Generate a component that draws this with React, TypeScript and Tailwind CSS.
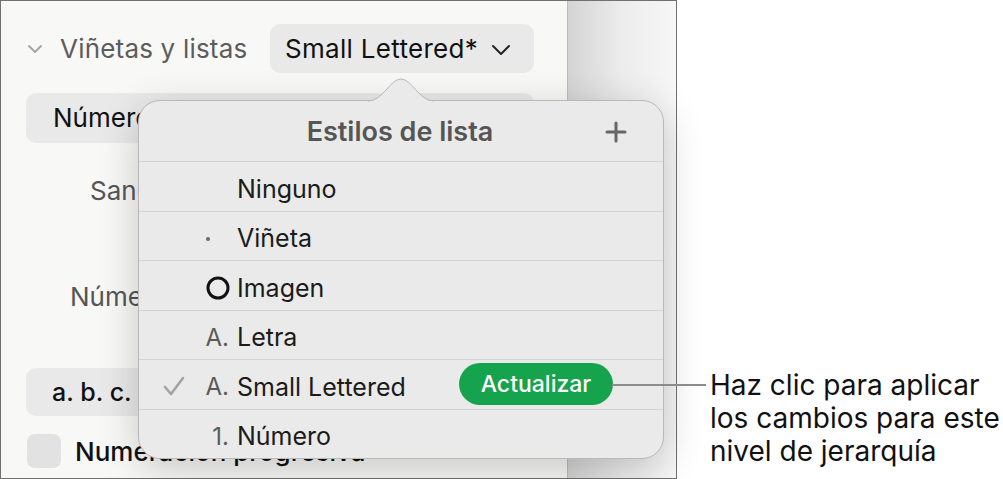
import React from "react";

function Row({
  prefix,
  label,
  checked,
  button,
}: {
  prefix?: React.ReactNode;
  label: string;
  checked?: boolean;
  button?: boolean;
}) {
  return (
    <div className="flex-1 flex items-center border-t border-[#d3d3d3] relative">
      <div className="w-[24px]" />
      <div className="w-[22px] flex items-center justify-center mt-[4px]">
        {checked && (
          <svg width="22" height="22" viewBox="0 0 22 22">
            <path d="M2 12 L8 19 L20 3" fill="none" stroke="#a3a3a3" strokeWidth="2.6" strokeLinecap="round" strokeLinejoin="round" />
          </svg>
        )}
      </div>
      <div className="w-[44px] flex justify-end items-center text-[24px] text-[#5a5a5a] mt-[6px]">{prefix}</div>
      <div className="ml-[8px] text-[25px] text-[#1b1b1b] leading-none mt-[6px]">{label}</div>
      {button && (
        <div className="ml-auto mr-[50px] w-[154px] h-[42px] rounded-full bg-[#15a34e] text-white text-[23px] font-medium flex items-center justify-center">
          Actualizar
        </div>
      )}
    </div>
  );
}

export default function App() {
  return (
    <div className="w-[1003px] h-[479px] bg-white relative flex font-[Inter,'Liberation_Sans',sans-serif] overflow-hidden">
      {/* Frame */}
      <div className="w-[677px] h-[479px] border border-[#707070] flex shrink-0 overflow-hidden">
        <div className="w-[566px] h-full bg-[#f8f8f7] flex flex-col pl-[25px] pr-[33px] pt-[23px]">
          <div className="flex items-center h-[49px]">
            <svg width="16" height="10" viewBox="0 0 16 10" className="ml-[1px]">
              <path d="M2 2 L8 8 L14 2" fill="none" stroke="#a6a6a6" strokeWidth="2" strokeLinecap="round" strokeLinejoin="round" />
            </svg>
            <div className="ml-[17px] text-[26px] text-[#5c5c5c] leading-none tracking-[0.2px]">Viñetas y listas</div>
            <div className="ml-auto w-[264px] h-[49px] rounded-[10px] bg-[#e9e9e9] flex items-center pl-[15px]">
              <span className="text-[26px] text-[#111] leading-none whitespace-nowrap tracking-[0.3px]">Small Lettered*</span>
              <svg width="20" height="12" viewBox="0 0 20 12" className="ml-[13px] mt-[2px]">
                <path d="M2 2 L10 10 L18 2" fill="none" stroke="#222" strokeWidth="2" strokeLinecap="round" strokeLinejoin="round" />
              </svg>
            </div>
          </div>
          <div className="mt-[20px] h-[50px] rounded-[10px] bg-[#e9e9e9] flex items-center pl-[27px]">
            <span className="text-[26px] text-[#111] leading-none">Número</span>
          </div>
          <div className="h-[96px] flex items-center pl-[64px]">
            <span className="text-[26px] text-[#555] leading-none">Sangría</span>
          </div>
          <div className="h-[116px] flex items-center pl-[44px]">
            <span className="text-[26px] text-[#555] leading-none">Número</span>
          </div>
          <div className="mt-[13px] h-[48px] rounded-[10px] bg-[#e9e9e9] flex items-center pl-[26px] w-[200px]">
            <span className="text-[25px] text-[#111] font-medium leading-none">a. b. c.</span>
          </div>
          <div className="mt-[18px] flex items-center">
            <div className="w-[34px] h-[34px] rounded-[8px] bg-[#e2e2e2] ml-[1px]" />
            <span className="ml-[14px] mt-[2px] text-[26px] text-[#111] font-medium leading-none whitespace-nowrap">Numeración progresiva</span>
          </div>
        </div>
        <div className="flex-1 h-full border-l border-[#bcbcbc] bg-gradient-to-r from-[#d4d4d4] via-[#ececec] to-[#f7f7f7]" />
      </div>

      {/* Popover */}
      <div className="absolute left-[138px] top-[100px] w-[526px] h-[359px] rounded-[22px] bg-[#eaeaea] border border-[#b9b9b9] shadow-[0_10px_40px_rgba(0,0,0,0.2)] flex flex-col">
        <svg width="66" height="24" viewBox="0 0 66 24" className="absolute left-[229px] top-[-23px]">
          <path d="M0 23.5 C15 23.5 22 1 33 1 C44 1 51 23.5 66 23.5 Z" fill="#eaeaea" />
          <path d="M0 23 C15 23 22 1 33 1 C44 1 51 23 66 23" fill="none" stroke="#b9b9b9" strokeWidth="1" />
        </svg>
        <div className="h-[60px] shrink-0 flex items-center justify-center relative">
          <span className="text-[27px] font-semibold text-[#555] leading-none ml-[-2px] mt-[1px]">Estilos de lista</span>
          <svg width="22" height="22" viewBox="0 0 22 22" className="absolute left-[466px] top-[20px]">
            <path d="M11 2 V20 M2 11 H20" stroke="#666" strokeWidth="3" strokeLinecap="round" />
          </svg>
        </div>
        <Row label="Ninguno" />
        <Row
          label="Viñeta"
          prefix={<span className="w-[4px] h-[4px] rounded-full bg-[#666] mr-[19px] inline-block" />}
        />
        <Row
          label="Imagen"
          prefix={
            <svg width="26" height="26" viewBox="0 0 26 26" className="mr-[-2px]">
              <circle cx="13" cy="13" r="10" fill="none" stroke="#111" strokeWidth="3" />
            </svg>
          }
        />
        <Row label="Letra" prefix={<span className="leading-none">A.</span>} />
        <Row label="Small Lettered" checked button prefix={<span className="leading-none">A.</span>} />
        <Row label="Número" prefix={<span className="leading-none">1.</span>} />
      </div>

      {/* Callout line */}
      <div className="absolute left-[612px] top-[384px] w-[94px] h-[2px] bg-[#8c8c8c]" />

      {/* Callout text */}
      <div className="ml-[33px] mt-[369px] text-[28px] leading-[33px] text-[#111] whitespace-nowrap">
        <div>Haz clic para aplicar</div>
        <div>los cambios para este</div>
        <div>nivel de jerarquía</div>
      </div>
    </div>
  );
}
